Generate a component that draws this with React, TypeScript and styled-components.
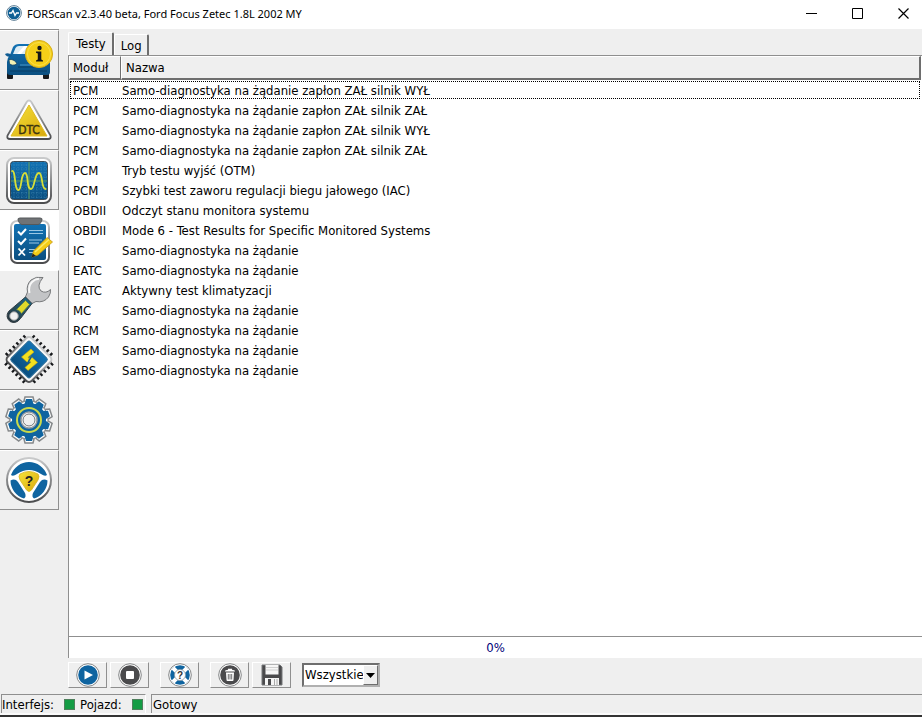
import React, { useState } from "react";
import styled, { createGlobalStyle } from "styled-components";

const ui = '"DejaVu Sans Condensed", "DejaVu Sans", Tahoma, sans-serif';
const face = "#efefef";
const shade = "#8f8f8f";
const navy = "#0f64a0";
const ink = "#4a4a4c";

const GlobalStyle = createGlobalStyle`
  * { box-sizing: border-box; }
  html, body, #root { height: 100%; margin: 0; }
  body { background: ${face}; color: #000; font: 13px/20px ${ui}; }
  button, select { font: inherit; color: inherit; }
`;

const Window = styled.div`
  display: flex;
  flex-direction: column;
  height: 100%;
  border-bottom: 2px solid #333;
  background: ${face};
`;

const TitleBar = styled.header`
  display: flex;
  align-items: center;
  flex: none;
  height: 29px;
  padding-left: 6px;
  background: #fff;
`;

const AppLogo = styled.svg`
  flex: none;
  margin-bottom: 3px;
`;

const Title = styled.h1`
  flex: 1;
  margin: 0 0 2px 5px;
  font: 11px/20px "Noto Sans", "Open Sans", sans-serif;
  white-space: nowrap;
  overflow: hidden;
`;

const CaptionButton = styled.button`
  display: grid;
  place-items: center;
  width: 46px;
  height: 29px;
  padding: 0 0 2px 8px;
  border: 0;
  background: transparent;
`;

const Body = styled.div`
  display: flex;
  flex: 1;
  min-height: 0;
`;

const Sidebar = styled.nav`
  flex: none;
  width: 59px;
  margin-right: 9px;
`;

const SideList = styled.div`
  border-top: 1px solid ${shade};
`;

const SideButton = styled.button<{ $active?: boolean }>`
  display: block;
  width: 59px;
  height: 60px;
  padding: 0;
  border: 0 solid ${shade};
  border-width: 1px 1px 1px 0;
  border-top-color: #fff;
  background: ${face};
  ${(p) => p.$active && "background: #fff; border-color: #fff;"}
  svg { display: block; }
`;

const Main = styled.main`
  display: flex;
  flex: 1;
  flex-direction: column;
  min-width: 0;
`;

const TabStrip = styled.div`
  display: flex;
  align-items: flex-end;
  flex: none;
  height: 26px;
`;

const Tab = styled.button<{ $active?: boolean }>`
  height: ${(p) => (p.$active ? 23 : 21)}px;
  padding: ${(p) => (p.$active ? "0 6px 0 7px" : "2px 5px 0 6px")};
  border: 1px solid #fff;
  border-right: 2px solid #6e6e6e;
  border-bottom: 0;
  border-radius: 2px 2px 0 0;
  background: ${face};
  line-height: 18px;
`;

const ListPane = styled.section`
  flex: 1;
  min-height: 0;
  overflow: hidden;
  padding-right: 1px;
  border: solid ${shade};
  border-width: 1px 0 1px 1px;
  background: #fff;
`;

const Table = styled.table`
  width: 100%;
  border-collapse: separate;
  border-spacing: 0;
  table-layout: fixed;
`;

const HeadCell = styled.th<{ $width?: number }>`
  width: ${(p) => (p.$width ? p.$width + "px" : "auto")};
  height: 24px;
  padding: 1px 4px 0;
  border: solid #6e6e6e;
  border-width: 1px 2px 2px 1px;
  border-top-color: #fff;
  border-left-color: #fff;
  background: ${face};
  font-weight: 400;
  text-align: left;
  ${(p) => p.$width && "border-right-width: 1px; padding-left: 3px;"}
`;

const Row = styled.tr<{ $focused?: boolean }>`
  ${(p) => p.$focused && "outline: 1px dotted #000; outline-offset: -2px;"}
`;

const Cell = styled.td`
  height: 20px;
  padding: 1px 0 0 1px;
  line-height: 19px;
  white-space: nowrap;
  &:first-child { padding-left: 4px; }
`;

const Progress = styled.div`
  display: grid;
  place-items: center;
  flex: none;
  height: 21px;
  border-left: 1px solid ${shade};
  background: #fff;
  color: #00007a;
`;

const Toolbar = styled.div`
  display: flex;
  align-items: center;
  flex: none;
  gap: 11px;
  height: 36px;
  padding-bottom: 2px;
`;

const ToolGroup = styled.div`
  display: flex;
  gap: 3px;
`;

const ToolButton = styled.button`
  display: grid;
  place-items: center;
  width: 39px;
  height: 26px;
  padding: 0;
  border: 1px solid ${shade};
  border-top-color: #fff;
  border-left-color: #fff;
  background: ${face};
`;

const SelectBox = styled.div`
  display: grid;
  grid-template-columns: 1fr 15px;
  align-items: center;
  width: 78px;
  height: 24px;
  border: 2px solid #6e6e6e;
  border-right-color: #b0b0b0;
  border-bottom-color: #b0b0b0;
  background: #fff;
`;

const Select = styled.select`
  grid-area: 1 / 1 / 2 / 3;
  width: 100%;
  height: 20px;
  padding: 0 0 0 1px;
  border: 0;
  outline: 0;
  appearance: none;
  background: transparent;
`;

const DropArrow = styled.span`
  display: grid;
  place-items: center;
  grid-area: 1 / 2 / 2 / 3;
  height: 20px;
  border: 1px solid #6e6e6e;
  border-top-color: #fff;
  border-left-color: #fff;
  background: ${face};
  pointer-events: none;
`;

const StatusBar = styled.footer`
  display: flex;
  flex: none;
  gap: 5px;
  height: 21px;
  padding-left: 1px;
  border-bottom: 2px solid #fafafa;
`;

const StatusPanel = styled.div<{ $grow?: boolean }>`
  display: flex;
  align-items: center;
  gap: 5px;
  flex: ${(p) => (p.$grow ? "1" : "none")};
  min-width: ${(p) => (p.$grow ? 0 : 145)}px;
  padding: 1px 1px 0;
  border: 1px solid ${shade};
  border-width: 1px 0 0 1px;
  line-height: 17px;
  white-space: nowrap;
  ${(p) => !p.$grow && "border-right: 1px solid #fff; padding: 1px 0 0;"}
`;

const Lamp = styled.span`
  width: 11px;
  height: 11px;
  margin-left: 5px;
  border: 1px solid #4f7f5c;
  background: #149c44;
`;

const SideIcon = ({ children }: { children: React.ReactNode }) => (
  <svg width="58" height="58" viewBox="0 0 58 58" aria-hidden="true">
    <defs>
      <linearGradient id="steel" x1="0" y1="0" x2="0" y2="1">
        <stop offset="0" stopColor="#c9cacb" />
        <stop offset="1" stopColor="#4b4c4e" />
      </linearGradient>
      <linearGradient id="gold" x1="0" y1="0" x2="1" y2="1">
        <stop offset="0" stopColor="#f6e23a" />
        <stop offset="1" stopColor="#d9a90c" />
      </linearGradient>
      <linearGradient id="blue" x1="0" y1="0" x2="0" y2="1">
        <stop offset="0" stopColor="#1272b4" />
        <stop offset="1" stopColor="#0b4f80" />
      </linearGradient>
      <linearGradient id="handle" x1="1" y1="0" x2="0" y2="1">
        <stop offset="0" stopColor="#1c6d8c" />
        <stop offset="1" stopColor="#2b3338" />
      </linearGradient>
    </defs>
    {children}
  </svg>
);

const CarIcon = () => (
  <SideIcon>
    <rect x="7" y="38" width="6" height="10" rx="1" fill="#17191c" />
    <rect x="43" y="38" width="6" height="10" rx="1" fill="#17191c" />
    <path d="M10 24 L13 16 Q15 13 19 13 H37 Q41 13 43 17 L47 25 Q50 28 50 33 V41 Q50 44 47 44 H10 Q7 44 7 41 V31 Q7 27 10 24Z" fill="url(#blue)" />
    <path d="M13 23 L15.500 17 Q16.500 15 19 15 H35 L37 23Z" fill="#dcecf5" />
    <path d="M17 23 L24 15 H28 L21 23Z" fill="#fff" />
    <path d="M5 23 Q8 21 12 24 L11 26 Q6 26 5 23Z" fill="#0f5b92" />
    <path d="M9 28.500 Q15 28 17 33 Q12 35.500 9.500 32.500Z" fill="#f1f1b4" stroke="#07385e" strokeWidth=".7" />
    <path d="M18 36 H42 M10 40 H47" stroke="#093c63" />
    <path d="M20 34 H39" stroke="#4696c8" />
    <circle cx="39" cy="23" r="13.600" fill="#f5cf18" stroke="#d7ae1d" />
    <circle cx="39" cy="23" r="11.500" fill="none" stroke="#f9df4b" />
    <circle cx="39.500" cy="17" r="2.200" fill="#171717" />
    <path d="M36 20.500 H41.300 V28.500 L43 29.500 V30.500 H36 V29.500 L37.800 28.500 V22.600 L36 21.800Z" fill="#171717" />
  </SideIcon>
);

const DtcIcon = () => (
  <SideIcon>
    <path d="M29 9.500 Q30.500 9.500 31.500 11.200 L50.500 44.500 Q51.500 48 48 48 H10 Q6.500 48 7.500 44.500 L26.500 11.200 Q27.500 9.500 29 9.500Z" fill="#fff" stroke="url(#steel)" strokeWidth="1.800" />
    <path d="M29 14 L47 45 H11Z" fill="url(#gold)" stroke="#e0bd22" strokeWidth="1" strokeLinejoin="round" />
    <text x="29" y="43" textAnchor="middle" fontFamily="Liberation Sans Narrow, DejaVu Sans Condensed" fontSize="12" fill="#3c3510" stroke="#3c3510" strokeWidth=".4">DTC</text>
  </SideIcon>
);

const ScopeIcon = () => (
  <SideIcon>
    <rect x="7" y="7" width="44" height="45" rx="7" fill="#fff" stroke="url(#steel)" strokeWidth="2" />
    <rect x="10.500" y="10.500" width="37" height="38" rx="3" fill="url(#blue)" stroke="#3e4b55" />
    <path d="M14 11V48M18 11V48M22 11V48M26 11V48M33 11V48M37 11V48M41 11V48M45 11V48M11 14H47M11 18H47M11 22H47M11 26H47M11 34H47M11 38H47M11 42H47M11 46H47" stroke="#4f93bd" strokeWidth=".6" strokeDasharray="1 1.500" />
    <path d="M29 11V48M11 30H47" stroke="#5f9d5c" strokeWidth="1" />
    <path d="M12 20 C16 19 14 39 18.500 39 C22 39 20.500 22 25 22 C29 22 26 38 31 38 C35 38 34 22 39 22 C43 22 41 38 45.500 38" fill="none" stroke="#d9df36" strokeWidth="1.800" strokeLinecap="round" />
  </SideIcon>
);

const TestsIcon = () => (
  <SideIcon>
    <rect x="11" y="10" width="38" height="42" rx="6" fill="#fff" stroke="url(#steel)" strokeWidth="2" />
    <rect x="14" y="13" width="32" height="36" rx="2" fill="url(#blue)" />
    <path d="M20 7 H40 Q42.500 7 42 9 L40.500 12 Q39.500 13.500 38 13.500 H22 Q20.500 13.500 19.500 12 L18 9 Q17.500 7 20 7Z" fill="#707376" stroke="#55585a" />
    <path d="M18 20.500 L21 23.500 L26 18 M18 30 L21 33 L26 27.500" fill="none" stroke="#fff" strokeWidth="2" />
    <path d="M18.500 37.500 L25 44.500 M25 37.500 L18.500 44.500" stroke="#fff" strokeWidth="1.800" />
    <path d="M29 19.500H43M29 22.500H43M29 29H42M29 32H39M29 38.500H35M29 41.500H33" stroke="#9cc8e4" strokeWidth="1.200" />
    <path d="M47 26.500 L52.500 31 L38 44 L32 46 L33.500 40Z" fill="#f4cd16" stroke="#c79612" strokeWidth=".8" />
    <path d="M35 41 L49 28.500" stroke="#fbe96a" strokeWidth="1.500" />
    <path d="M32.700 42.500 L36 45 L31.500 46.500Z" fill="#222" />
  </SideIcon>
);

const WrenchIcon = () => (
  <SideIcon>
    <path d="M43 6.500 Q36 5 31 9 Q26 14 27.500 21 L25 27 L31 33 L36 30.500 Q44 32 48.500 26 Q51 22 50.500 18.500 Q46 23 41 20 Q36 15 43 6.500Z" fill="#c3c4c6" stroke="#77797b" />
    <path d="M29.500 22 Q28 15 32 11 Q35 8 39 7.800" fill="none" stroke="#f7f7f7" strokeWidth="2" />
    <path d="M25.500 26 L32 32.500 L20.500 47.500 Q16 53.500 10 50.500 Q5 46 8.500 40.500Z" fill="url(#handle)" stroke="#303b42" />
    <path d="M25.500 29.500 L29.500 33.500 L21.500 42.500 Q19.500 39 16.500 38.500Z" fill="#dfd92b" stroke="#5f8049" strokeWidth=".8" />
    <circle cx="14" cy="45" r="4.300" fill="#f0f0f0" stroke="#8f9395" />
  </SideIcon>
);

const pins = [-13, -8, -3, 2, 7, 12];

const ChipIcon = () => (
  <SideIcon>
    <g transform="translate(29 28.500) rotate(45)">
      {pins.map((p) => (
        <path key={p} d={`M${p} -21V21M-21 ${p}H21`} stroke="#17191c" strokeWidth="2.200" />
      ))}
      <rect x="-17" y="-17" width="34" height="34" rx="4" fill="#f8f8f8" stroke="url(#steel)" strokeWidth="2" />
      <rect x="-13.500" y="-13.500" width="27" height="27" rx="2" fill="url(#blue)" stroke="#2d6f9b" />
    </g>
    <path d="M31 18 L21.500 26 L28 32 L31 29.300 L28 26.300 L34 21Z" fill="#f3e11f" stroke="#c9a60f" strokeWidth=".6" />
    <path d="M28 39.500 L37.500 31.500 L31 25.500 L28 28.200 L31 31.200 L25 36.500Z" fill="#f3e11f" stroke="#c9a60f" strokeWidth=".6" />
    <path d="M27.500 32.300 L31.500 25.300" stroke="#0f5b92" strokeWidth="1.600" />
  </SideIcon>
);

const toothAngles = [0, 36, 72, 108, 144, 180, 216, 252, 288, 324];

const GearIcon = () => (
  <SideIcon>
    <g transform="translate(29 29)">
      <g fill="#fff" stroke="#85888a" strokeWidth="1.500">
        {toothAngles.map((a) => (
          <path key={a} d="M-5.500 -17 L-4 -23 H4 L5.500 -17Z" transform={`rotate(${a})`} />
        ))}
      </g>
      <circle r="19" fill="#fff" stroke="#85888a" strokeWidth="1" />
      <g fill={navy}>
        {toothAngles.map((a) => (
          <path key={a} d="M-5 -14 L-3 -21 H3 L5 -14Z" transform={`rotate(${a})`} />
        ))}
      </g>
      <circle r="17" fill={navy} />
      <circle r="12" fill="none" stroke="#c9d94a" strokeWidth="2" />
      <circle r="8" fill="#fff" stroke="#9b9ea0" strokeWidth="1.500" />
      <circle r="6" fill={face} stroke="#707476" strokeWidth="1" />
    </g>
  </SideIcon>
);

const WheelIcon = () => (
  <SideIcon>
    <circle cx="29" cy="29" r="22" fill="#fff" stroke="url(#steel)" strokeWidth="2" />
    <path d="M11 24 A19 19 0 0 1 47 24 Q45 26 41 23 Q29 15 17 23 Q13 26 11 24Z" fill={navy} />
    <path d="M10.500 29.500 Q15 27 18 31 L25 42 Q26.500 46 24 47.500 A19 19 0 0 1 10.500 29.500Z" fill={navy} />
    <path d="M47.500 29.500 Q43 27 40 31 L33 42 Q31.500 46 34 47.500 A19 19 0 0 0 47.500 29.500Z" fill={navy} />
    <path d="M20 23 Q29 18 38 23 Q40 25 38 29 L31.500 39 Q29 42 26.500 39 L20 29 Q18 25 20 23Z" fill="url(#gold)" stroke="#d6b51f" strokeWidth=".8" />
    <text x="29" y="35" textAnchor="middle" fontFamily="Liberation Sans" fontWeight="bold" fontSize="14" fill="#222">?</text>
  </SideIcon>
);

const RoundIcon = ({ fill, children }: { fill: string; children: React.ReactNode }) => (
  <svg width="24" height="24" viewBox="0 0 24 24" aria-hidden="true">
    <circle cx="12" cy="12" r="11.300" fill="#fff" stroke="#77797b" strokeWidth=".9" />
    <circle cx="12" cy="12" r="9.800" fill={fill} />
    {children}
  </svg>
);

const PlayIcon = () => (
  <RoundIcon fill={navy}>
    <path d="M8.500 7.500 L17 12 L8.500 16.500Z" fill="#fff" />
  </RoundIcon>
);

const StopIcon = () => (
  <RoundIcon fill={ink}>
    <rect x="8" y="8" width="8" height="8" rx="1" fill="#fff" />
  </RoundIcon>
);

const HelpIcon = () => (
  <RoundIcon fill={navy}>
    <path d="M5 5 L19 19 M19 5 L5 19" stroke="#fff" strokeWidth="4" />
    <circle cx="12" cy="12" r="5.500" fill="#fff" stroke="#8b9aa5" strokeWidth=".8" />
    <text x="12" y="15.500" textAnchor="middle" fontFamily="Liberation Sans" fontWeight="bold" fontSize="10" fill="#333">?</text>
  </RoundIcon>
);

const TrashIcon = () => (
  <RoundIcon fill={ink}>
    <path d="M7 8.500 Q7 6.800 10 6.800 V5.800 H14 V6.800 Q17 6.800 17 8.500Z" fill="#fff" />
    <path d="M8 9.500 H16 L15.500 17 Q15.500 18 14.500 18 H9.500 Q8.500 18 8.500 17Z" fill="#fff" />
    <path d="M10.300 11V16.500M12 11V16.500M13.700 11V16.500" stroke={ink} strokeWidth=".8" />
  </RoundIcon>
);

const SaveIcon = () => (
  <svg width="22" height="22" viewBox="0 0 22 22" aria-hidden="true">
    <path d="M1 1 H19 L21 3 V21 H1Z" fill={ink} stroke="#747678" />
    <rect x="4.500" y="1" width="13" height="9.500" fill="#f6f6f6" />
    <path d="M5 3.500H17M5 6H17" stroke="#d0d0d0" />
    <rect x="4" y="14" width="14" height="7" fill="#f6f6f6" />
    <rect x="7" y="15" width="3" height="6" fill={ink} />
    <path d="M13.500 15V21M16 15V21" stroke="#aaa" />
  </svg>
);

const AppIcon = () => (
  <AppLogo width="16" height="16" viewBox="0 0 16 16" aria-hidden="true">
    <circle cx="8" cy="8" r="7.400" fill="#fff" stroke="#5f7f96" strokeWidth="1" />
    <circle cx="8" cy="8" r="6.300" fill="#0f5f94" />
    <path d="M3 8H5.500L7 5.500L9 10.500L10.500 8H13" fill="none" stroke="#fff" strokeWidth="1.300" />
  </AppLogo>
);

const sections = [
  { name: "Pojazd", icon: <CarIcon /> },
  { name: "DTC", icon: <DtcIcon /> },
  { name: "Oscyloskop", icon: <ScopeIcon /> },
  { name: "Testy", icon: <TestsIcon /> },
  { name: "Serwis", icon: <WrenchIcon /> },
  { name: "Konfiguracja", icon: <ChipIcon /> },
  { name: "Ustawienia", icon: <GearIcon /> },
  { name: "Pomoc", icon: <WheelIcon /> },
];

const tests = [
  ["PCM", "Samo-diagnostyka na żądanie zapłon ZAŁ silnik WYŁ"],
  ["PCM", "Samo-diagnostyka na żądanie zapłon ZAŁ silnik ZAŁ"],
  ["PCM", "Samo-diagnostyka na żądanie zapłon ZAŁ silnik WYŁ"],
  ["PCM", "Samo-diagnostyka na żądanie zapłon ZAŁ silnik ZAŁ"],
  ["PCM", "Tryb testu wyjść (OTM)"],
  ["PCM", "Szybki test zaworu regulacji biegu jałowego (IAC)"],
  ["OBDII", "Odczyt stanu monitora systemu"],
  ["OBDII", "Mode 6 - Test Results for Specific Monitored Systems"],
  ["IC", "Samo-diagnostyka na żądanie"],
  ["EATC", "Samo-diagnostyka na żądanie"],
  ["EATC", "Aktywny test klimatyzacji"],
  ["MC", "Samo-diagnostyka na żądanie"],
  ["RCM", "Samo-diagnostyka na żądanie"],
  ["GEM", "Samo-diagnostyka na żądanie"],
  ["ABS", "Samo-diagnostyka na żądanie"],
];

export default function App() {
  const [section, setSection] = useState(3);
  const [focused, setFocused] = useState(0);

  return (
    <Window>
      <GlobalStyle />
      <TitleBar>
        <AppIcon />
        <Title>FORScan v2.3.40 beta, Ford Focus Zetec 1.8L 2002 MY</Title>
        <CaptionButton aria-label="Minimalizuj">
          <svg width="11" height="11"><path d="M0 5.500H11" stroke="#000" /></svg>
        </CaptionButton>
        <CaptionButton aria-label="Maksymalizuj">
          <svg width="11" height="11"><path d="M.5 .5H10.500V10.500H.5Z" fill="none" stroke="#000" /></svg>
        </CaptionButton>
        <CaptionButton aria-label="Zamknij">
          <svg width="11" height="11"><path d="M.5 .5L10.500 10.500M10.500 .5L.5 10.500" stroke="#000" strokeWidth="1.200" /></svg>
        </CaptionButton>
      </TitleBar>
      <Body>
        <Sidebar>
          <SideList>
            {sections.map((s, i) => (
              <SideButton key={s.name} aria-label={s.name} $active={i === section} onClick={() => setSection(i)}>
                {s.icon}
              </SideButton>
            ))}
          </SideList>
        </Sidebar>
        <Main>
          <TabStrip role="tablist">
            <Tab role="tab" aria-selected="true" $active>Testy</Tab>
            <Tab role="tab" aria-selected="false">Log</Tab>
          </TabStrip>
          <ListPane>
            <Table>
              <thead>
                <tr>
                  <HeadCell $width={52}>Moduł</HeadCell>
                  <HeadCell>Nazwa</HeadCell>
                </tr>
              </thead>
              <tbody>
                {tests.map(([module, name], i) => (
                  <Row key={i} $focused={i === focused} onClick={() => setFocused(i)}>
                    <Cell>{module}</Cell>
                    <Cell>{name}</Cell>
                  </Row>
                ))}
              </tbody>
            </Table>
          </ListPane>
          <Progress role="progressbar" aria-label="Postęp" aria-valuenow={0}>0%</Progress>
          <Toolbar>
            <ToolGroup>
              <ToolButton aria-label="Uruchom"><PlayIcon /></ToolButton>
              <ToolButton aria-label="Zatrzymaj"><StopIcon /></ToolButton>
            </ToolGroup>
            <ToolButton aria-label="Pomoc"><HelpIcon /></ToolButton>
            <ToolGroup>
              <ToolButton aria-label="Usuń"><TrashIcon /></ToolButton>
              <ToolButton aria-label="Zapisz"><SaveIcon /></ToolButton>
            </ToolGroup>
            <SelectBox>
              <Select aria-label="Filtr modułów" defaultValue="all">
                <option value="all">Wszystkie</option>
              </Select>
              <DropArrow>
                <svg width="9" height="5" aria-hidden="true"><path d="M0 0H9L4.500 5Z" /></svg>
              </DropArrow>
            </SelectBox>
          </Toolbar>
        </Main>
      </Body>
      <StatusBar>
        <StatusPanel>
          Interfejs:<Lamp />Pojazd:<Lamp />
        </StatusPanel>
        <StatusPanel $grow>Gotowy</StatusPanel>
      </StatusBar>
    </Window>
  );
}
